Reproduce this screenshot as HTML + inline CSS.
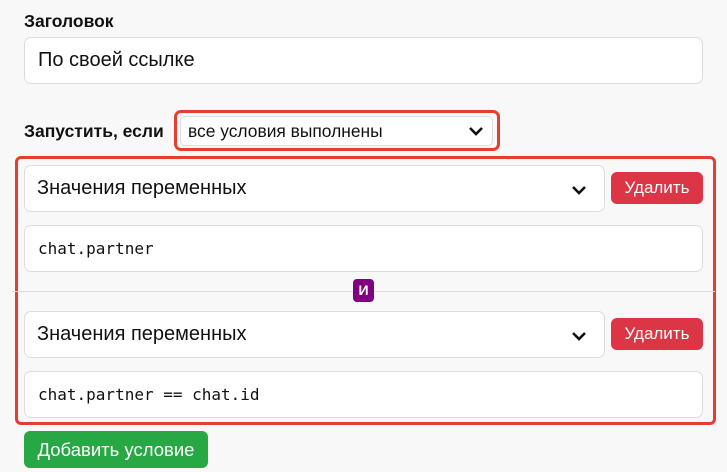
<!DOCTYPE html>
<html><head><meta charset="utf-8"><style>
body{margin:0;width:727px;height:472px;background:#f8f8f8;font-family:"Liberation Sans",sans-serif;position:relative;overflow:hidden;color:#111}
.a{position:absolute;box-sizing:border-box}
.inp{background:#fff;border:1px solid #dcdcdc;border-radius:7px}
.lbl{font-weight:bold;font-size:17.5px}
.t{position:absolute;white-space:nowrap}
.del{background:#dc3545;color:#fff;border-radius:6px;font-size:17px;text-align:center;line-height:32px}
.mono{font-family:"DejaVu Sans Mono","Liberation Mono",monospace;font-size:16px}
svg{position:absolute}
</style></head><body>
<div class="t lbl" style="left:24px;top:11px">Заголовок</div>
<div class="a inp" style="left:24px;top:37px;width:679px;height:47px"><div class="t" style="left:13px;top:11px;font-size:20px">По своей ссылке</div></div>

<div class="t lbl" style="left:24px;top:121px">Запустить, если</div>
<div class="a" style="left:174px;top:110px;width:326px;height:41px;border:3px solid #e53e30;border-radius:7px"></div>
<div class="a inp" style="left:180px;top:116px;width:313px;height:30px;border-radius:5px"><div class="t" style="left:7px;top:4px;font-size:17.4px">все условия выполнены</div>
<svg style="left:287px;top:8px" width="16" height="12" viewBox="0 0 16 12"><path d="M2 3l6 6 6-6" stroke="#111" stroke-width="2.6" fill="none"/></svg></div>

<div class="a" style="left:15px;top:156px;width:701px;height:269px;border:3px solid #e53e30;border-radius:6px"></div>

<div class="a inp" style="left:24px;top:165px;width:581px;height:47px"><div class="t" style="left:12px;top:11px;font-size:20px">Значения переменных</div>
<svg style="left:546px;top:18px" width="16" height="12" viewBox="0 0 16 12"><path d="M2 3l6 6 6-6" stroke="#111" stroke-width="2.6" fill="none"/></svg></div>
<div class="a del" style="left:611px;top:172px;width:92px;height:32px">Удалить</div>
<div class="a inp" style="left:24px;top:225px;width:679px;height:47px"><div class="t mono" style="left:13px;top:13px">chat.partner</div></div>

<div class="a" style="left:12px;top:291px;width:703px;height:1px;background:#ddd"></div>
<div class="a" style="left:353px;top:279px;width:21px;height:23px;background:#800080;border-radius:4px;color:#fff;font-weight:bold;font-size:14px;text-align:center;line-height:23px">И</div>

<div class="a inp" style="left:24px;top:311px;width:581px;height:47px"><div class="t" style="left:12px;top:11px;font-size:20px">Значения переменных</div>
<svg style="left:546px;top:18px" width="16" height="12" viewBox="0 0 16 12"><path d="M2 3l6 6 6-6" stroke="#111" stroke-width="2.6" fill="none"/></svg></div>
<div class="a del" style="left:611px;top:318px;width:92px;height:32px">Удалить</div>
<div class="a inp" style="left:24px;top:371px;width:679px;height:47px"><div class="t mono" style="left:13px;top:13px">chat.partner == chat.id</div></div>

<div class="a" style="left:24px;top:431px;width:184px;height:37px;background:#28a745;border-radius:6px;color:#fff;font-size:18.5px;text-align:center;line-height:37px">Добавить условие</div>
</body></html>
